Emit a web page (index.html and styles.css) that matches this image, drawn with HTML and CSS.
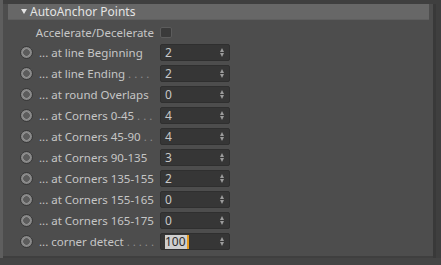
FILE: index.html
```html
<!DOCTYPE html>
<html lang="en">
<head>
    <meta charset="UTF-8">
    <title>AutoAnchor Points</title>
    <link rel="stylesheet" href="styles.css">
</head>
<body>

    <div class="frame">
        <div class="panel">
            <div class="group-head"><span class="arrow"></span>AutoAnchor Points</div>

            <div class="row check-row">
                <span class="label">Accelerate/Decelerate</span>
                <span class="checkbox"></span>
            </div>

            <div class="row"><span class="radio"></span><span class="label">... at line Beginning</span><div class="field"><span>2</span><i class="spin"></i></div></div>
            <div class="row"><span class="radio"></span><span class="label">... at line Ending <em>. . . .</em></span><div class="field"><span>2</span><i class="spin"></i></div></div>
            <div class="row"><span class="radio"></span><span class="label">... at round Overlaps</span><div class="field"><span>0</span><i class="spin"></i></div></div>
            <div class="row"><span class="radio"></span><span class="label">... at Corners 0-45 <em>. . .</em></span><div class="field"><span>4</span><i class="spin"></i></div></div>
            <div class="row"><span class="radio"></span><span class="label">... at Corners 45-90 <em>. .</em></span><div class="field"><span>4</span><i class="spin"></i></div></div>
            <div class="row"><span class="radio"></span><span class="label">... at Corners 90-135</span><div class="field"><span>3</span><i class="spin"></i></div></div>
            <div class="row"><span class="radio"></span><span class="label">... at Corners 135-155</span><div class="field"><span>2</span><i class="spin"></i></div></div>
            <div class="row"><span class="radio"></span><span class="label">... at Corners 155-165</span><div class="field"><span>0</span><i class="spin"></i></div></div>
            <div class="row"><span class="radio"></span><span class="label">... at Corners 165-175</span><div class="field"><span>0</span><i class="spin"></i></div></div>
            <div class="row"><span class="radio"></span><span class="label">... corner detect <em>. . . . .</em></span><div class="field"><span class="selected">100</span><b class="caret"></b><i class="spin"></i></div></div>
        </div>
        <div class="scroll-edge"></div>
    </div>

</body>
</html>
```

FILE: styles.css
```css
* {
    margin: 0;
    padding: 0;
    box-sizing: border-box;
}

body {
    width: 441px;
    height: 265px;
    overflow: hidden;
    background-color: #444444;
    font-family: 'Noto Sans', 'Open Sans', sans-serif;
    font-size: 11.5px;
    color: #c6c6c6;
}

.frame {
    display: flex;
    height: 258px;
    padding-top: 4px;
    border-left: 3px solid #5e5e5e;
    background-color: #3f3f3f;
}

.panel {
    flex: none;
    width: 430px;
    height: 252px;
    background-color: #4d4d4d;
    padding-left: 5px;
}

.scroll-edge {
    flex: none;
    width: 3px;
    height: 254px;
    background-color: #393939;
}

/* Group header */
.group-head {
    display: flex;
    align-items: center;
    width: 421px;
    height: 16px;
    background-color: #676767;
    border-bottom: 1px solid #5f5f5f;
    color: #e4e4e4;
    padding-left: 13px;
    font-size: 12px;
}

.arrow {
    width: 0;
    height: 0;
    border-left: 3.5px solid transparent;
    border-right: 3.5px solid transparent;
    border-top: 5px solid #e4e4e4;
    margin-right: 3px;
}

/* Parameter rows */
.row {
    display: flex;
    align-items: center;
    height: 21px;
    padding-left: 12px;
}

.check-row {
    height: 22px;
    padding-top: 2px;
    padding-left: 0;
}

.check-row .label {
    width: 146px;
    text-align: right;
    margin-right: 6px;
}

.checkbox {
    width: 12px;
    height: 11px;
    border-radius: 2px;
    background-color: #3a3a3a;
    border: 1px solid #5c5c5c;
}

.radio {
    flex: none;
    width: 13px;
    height: 13px;
    border-radius: 50%;
    border: 1px solid #383838;
    background: radial-gradient(circle, #5c5c5c 0, #5c5c5c 3px, #8e8e8e 3.6px, #828282 5.5px);
    margin-right: 6px;
}

.label {
    flex: none;
    width: 121px;
    white-space: nowrap;
}

.label em {
    font-style: normal;
    color: #8c8c8c;
}

/* Number fields */
.field {
    flex: none;
    display: flex;
    align-items: center;
    position: relative;
    width: 70px;
    height: 17px;
    background-color: #363636;
    border: 1px solid #2f2f2f;
    border-radius: 2px;
    padding-left: 4px;
    font-size: 12px;
}

.field span {
    color: #c8c8c8;
    line-height: 14px;
}

.field .selected {
    background-color: #cfcfcf;
    color: #2c2c2c;
    padding: 0 1px 0 0;
}

.caret {
    width: 2px;
    height: 14px;
    background-color: #e69a1e;
}

.spin {
    position: absolute;
    right: 4px;
    top: 3px;
    width: 5px;
    height: 9px;
}

.spin::before,
.spin::after {
    content: "";
    position: absolute;
    left: 0;
    border-left: 2.5px solid transparent;
    border-right: 2.5px solid transparent;
}

.spin::before {
    top: 0;
    border-bottom: 4px solid #9c9c9c;
}

.spin::after {
    bottom: 0;
    border-top: 4px solid #9c9c9c;
}
```
